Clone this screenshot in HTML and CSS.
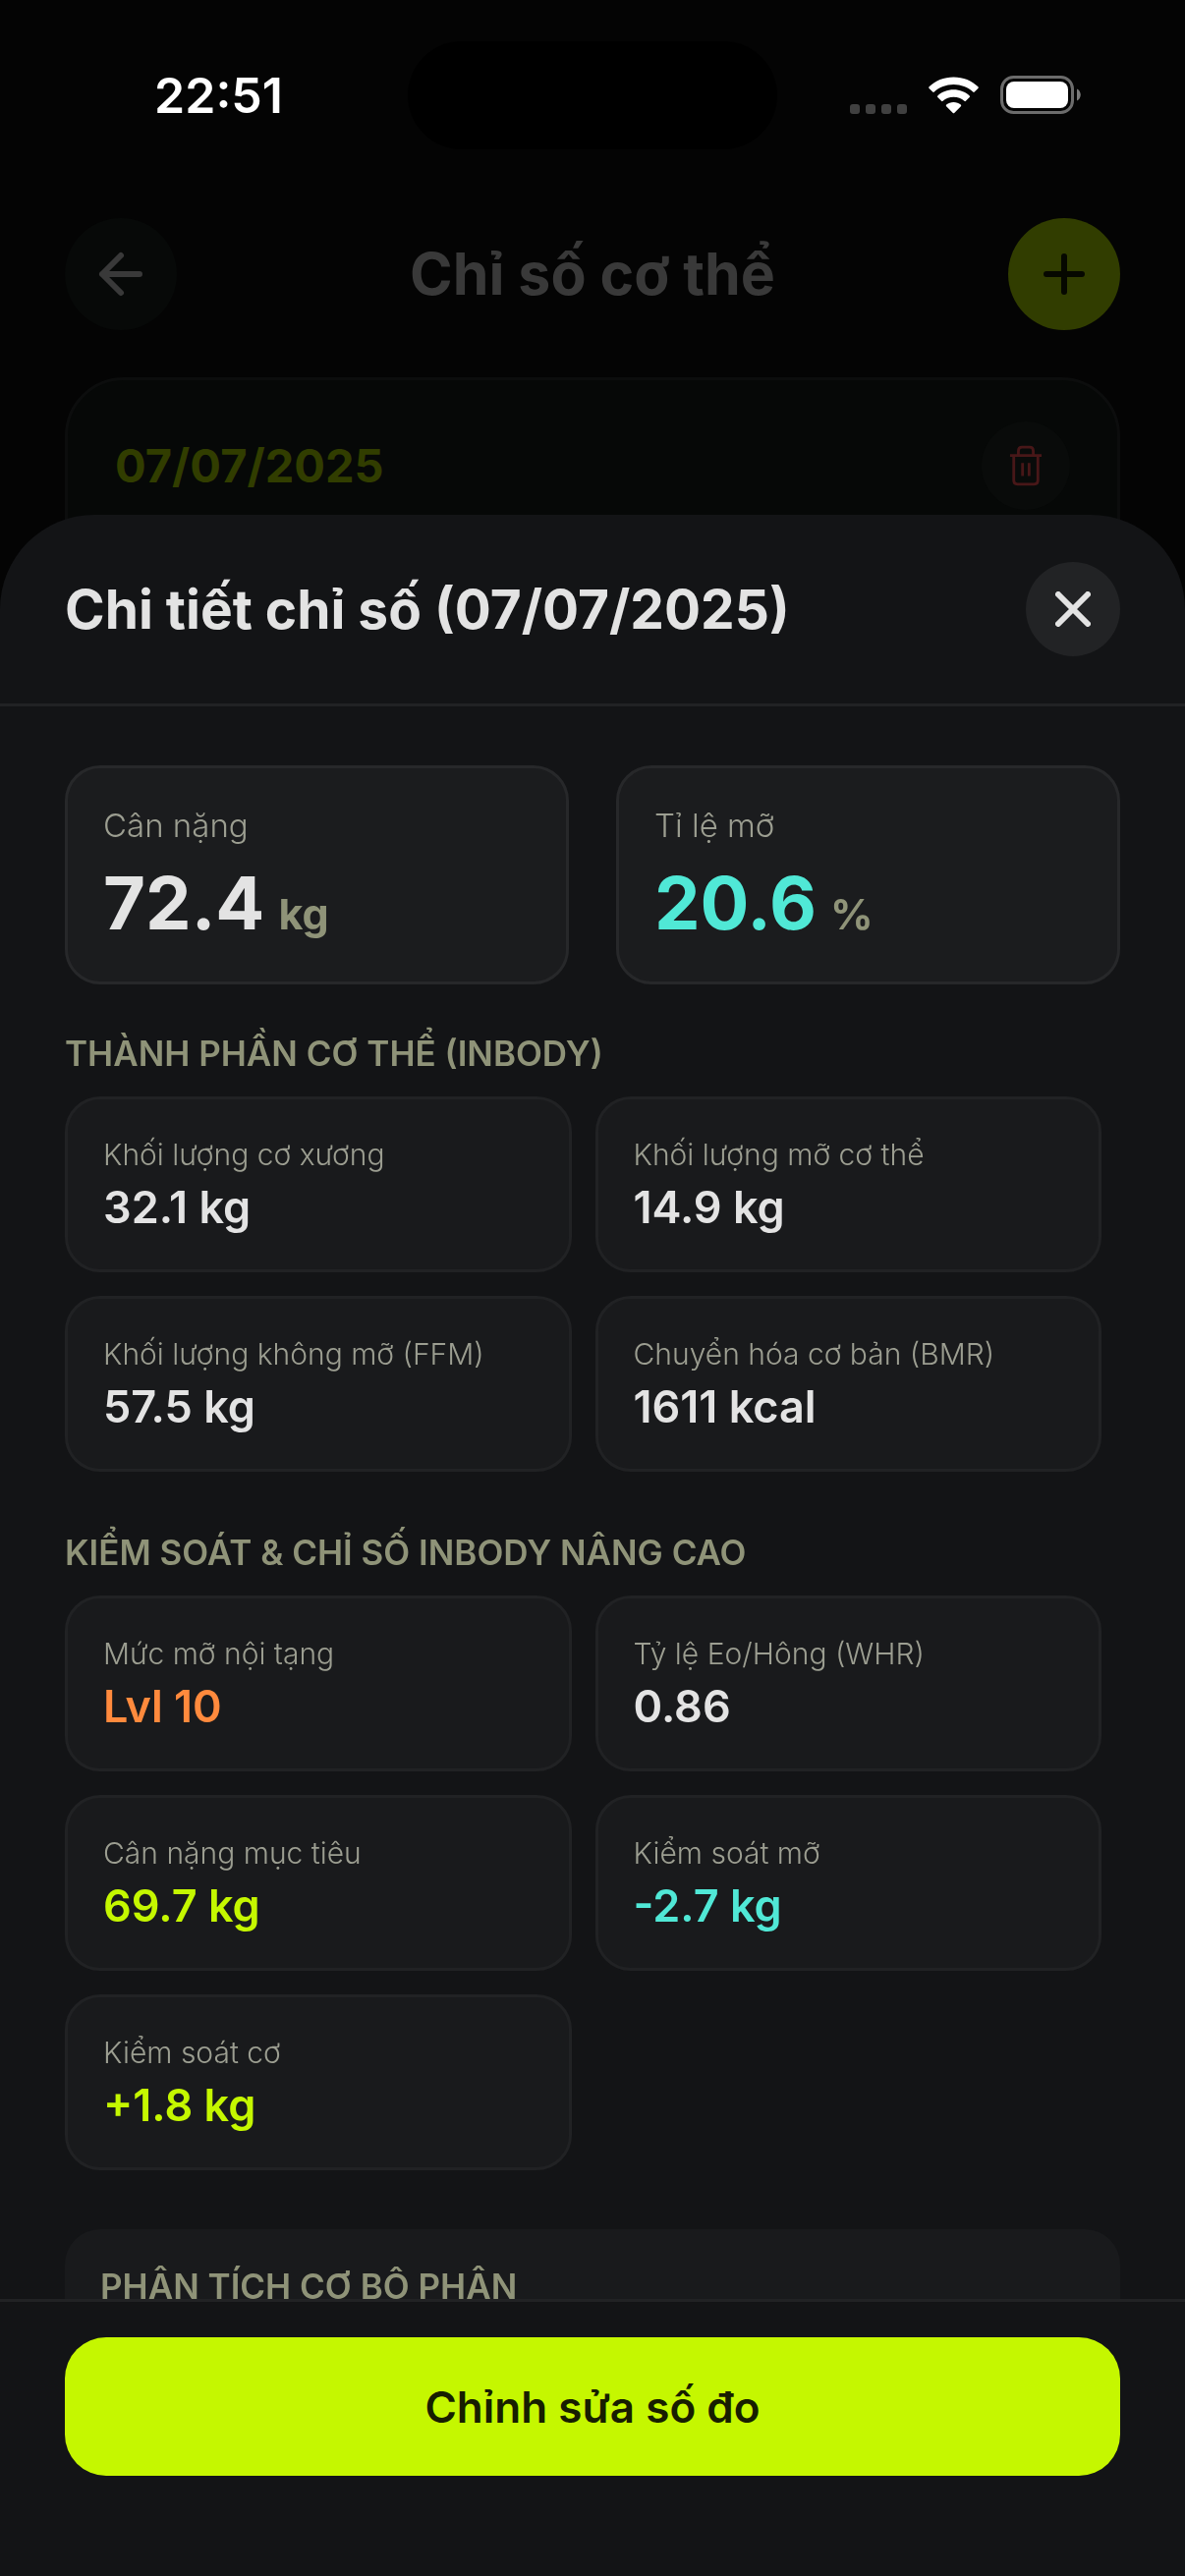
FILE: index.html
```html
<!DOCTYPE html>
<html lang="vi">
<head>
<meta charset="utf-8">
<meta name="viewport" content="width=device-width, initial-scale=1">
<title>Chỉ số cơ thể</title>
<link rel="stylesheet" href="styles.css">
</head>
<body>
<div class="status">
  <time class="status-time">22:51</time>
  <div class="island"></div>
  <div class="status-icons">
    <svg class="signal" viewBox="0 0 58 38" aria-hidden="true">
      <rect x="0" y="28" width="10" height="10" rx="3"/><rect x="16" y="28" width="10" height="10" rx="3"/><rect x="32" y="28" width="10" height="10" rx="3"/><rect x="48" y="28" width="10" height="10" rx="3"/>
    </svg>
    <svg class="wifi" viewBox="0 0 51 38" aria-hidden="true">
      <path d="M25.500 0.500C35.300 0.500 44.200 4.200 50.400 10.300Q51.200 11.100 50.400 11.900L46.800 15.500Q46 16.300 45.200 15.500C40 10.800 33.100 8 25.500 8S11 10.800 5.800 15.500Q5 16.300 4.200 15.500L.6 11.900Q-.2 11.100 .6 10.300C6.800 4.200 15.700 .5 25.500 .5Z"/>
      <path d="M25.500 13.300C31.800 13.300 37.500 15.600 41.700 19.500Q42.500 20.300 41.700 21.100L37.900 24.800Q37.200 25.500 36.400 24.800C33.500 22.300 29.700 20.800 25.500 20.800S17.500 22.300 14.600 24.800Q13.800 25.500 13.100 24.800L9.300 21.100Q8.500 20.300 9.300 19.500C13.500 15.600 19.200 13.300 25.500 13.300Z"/>
      <path d="M25.500 26C28.300 26 30.800 27 32.800 28.600Q33.700 29.400 32.900 30.200L26.200 37Q25.500 37.700 24.800 37L18.100 30.200Q17.300 29.400 18.200 28.600C20.200 27 22.700 26 25.500 26Z"/>
    </svg>
    <svg class="battery" viewBox="0 0 82 40" aria-hidden="true">
      <rect class="shell" x="1.500" y="1.500" width="72" height="36" rx="12"/>
      <rect x="6" y="6" width="63" height="27" rx="8"/>
      <path class="nub" d="M78 13.500c5 2 5 10 0 12z"/>
    </svg>
  </div>
</div>

<main class="screen">
  <header class="topbar">
    <button class="round back" aria-label="Quay lại">
      <svg viewBox="0 0 48 48" aria-hidden="true"><path d="M43 24H5M24 5 5 24l19 19"/></svg>
    </button>
    <h1 class="screen-title">Chỉ số cơ thể</h1>
    <button class="round add" aria-label="Thêm">
      <svg viewBox="0 0 48 48" aria-hidden="true"><path d="M24 6v36M6 24h36"/></svg>
    </button>
  </header>
  <article class="record">
    <h2 class="record-date">07/07/2025</h2>
    <button class="record-delete" aria-label="Xóa">
      <svg viewBox="0 0 36 44" aria-hidden="true"><path d="M1 11h34M10 11V6q0-4 4-4h8q4 0 4 4v5M5 11v27q0 4 4 4h18q4 0 4-4V11M14.500 19v14M21.500 19v14"/></svg>
    </button>
  </article>
</main>

<section class="sheet" role="dialog" aria-labelledby="sheet-title">
  <header class="sheet-head">
    <h2 class="sheet-title" id="sheet-title">Chi tiết chỉ số (07/07/2025)</h2>
    <button class="close" aria-label="Đóng">
      <svg viewBox="0 0 36 36" aria-hidden="true"><path d="M3 3l30 30M33 3 3 33"/></svg>
    </button>
  </header>

  <div class="sheet-body">
    <dl class="summary">
      <div class="tile tile-large">
        <dt class="label-large">Cân nặng</dt>
        <dd class="figure"><span>72.4</span><span class="unit">kg</span></dd>
      </div>
      <div class="tile tile-large">
        <dt class="label-large">Tỉ lệ mỡ</dt>
        <dd class="figure teal"><span>20.6</span><span class="unit">%</span></dd>
      </div>
    </dl>

    <section class="group group-first">
      <h3 class="group-title">THÀNH PHẦN CƠ THỂ (INBODY)</h3>
      <dl class="tiles">
        <div class="tile"><dt class="label">Khối lượng cơ xương</dt><dd class="value">32.1 kg</dd></div>
        <div class="tile"><dt class="label">Khối lượng mỡ cơ thể</dt><dd class="value">14.9 kg</dd></div>
        <div class="tile"><dt class="label">Khối lượng không mỡ (FFM)</dt><dd class="value">57.5 kg</dd></div>
        <div class="tile"><dt class="label">Chuyển hóa cơ bản (BMR)</dt><dd class="value">1611 kcal</dd></div>
      </dl>
    </section>

    <section class="group">
      <h3 class="group-title">KIỂM SOÁT &amp; CHỈ SỐ INBODY NÂNG CAO</h3>
      <dl class="tiles">
        <div class="tile"><dt class="label">Mức mỡ nội tạng</dt><dd class="value orange">Lvl 10</dd></div>
        <div class="tile"><dt class="label">Tỷ lệ Eo/Hông (WHR)</dt><dd class="value">0.86</dd></div>
        <div class="tile"><dt class="label">Cân nặng mục tiêu</dt><dd class="value lime">69.7 kg</dd></div>
        <div class="tile"><dt class="label">Kiểm soát mỡ</dt><dd class="value teal">-2.7 kg</dd></div>
        <div class="tile"><dt class="label">Kiểm soát cơ</dt><dd class="value lime">+1.8 kg</dd></div>
      </dl>
    </section>

    <section class="group segments">
      <h3 class="group-title">PHÂN TÍCH CƠ BỘ PHẬN</h3>
    </section>
  </div>

  <footer class="sheet-foot">
    <button class="edit">Chỉnh sửa số đo</button>
  </footer>
</section>
</body>
</html>
```

FILE: styles.css
```css
:root {
  --sheet: #131416;
  --line: #212224;
  --text: #e3e3e3;
  --muted: #9c9e91;
  --olive: #8f9378;
  --lime: #c5f700;
  --teal: #50e8d6;
  --orange: #ff8a3d;
}

* { box-sizing: border-box; }

body {
  margin: 0;
  min-height: 100vh;
  overflow: hidden;
  background: #040404;
  color: var(--text);
  font-family: Inter, "Noto Sans", sans-serif;
}

h1, h2, h3, dl, dd { margin: 0; }

button {
  display: flex;
  align-items: center;
  justify-content: center;
  flex: none;
  padding: 0;
  border: 0;
  border-radius: 50%;
  font-family: inherit;
}

button svg {
  fill: none;
  stroke: currentColor;
  stroke-linecap: round;
  stroke-linejoin: round;
}

/* Status bar */
.status {
  display: grid;
  grid-template-columns: minmax(0, 1fr) 376px minmax(0, 1fr);
  align-items: center;
  padding-top: 42px;
}
.status-time {
  padding-left: 30px;
  color: #fff;
  font-size: 50px;
  font-weight: 600;
  line-height: 60px;
  text-align: center;
}
.island { height: 110px; border-radius: 55px; background: #000; }
.status-icons {
  display: flex;
  align-items: center;
  justify-content: flex-end;
  gap: 22px;
  padding-right: 106px;
  fill: #fff;
}
.status-icons svg { flex: none; }
.signal { width: 58px; height: 38px; fill: #404040; }
.wifi { width: 51px; height: 38px; }
.battery { width: 82px; height: 40px; }
.shell { fill: none; stroke: #6c6c6c; stroke-width: 3; }
.nub { fill: #7a7a7a; }

/* Dimmed screen behind the sheet */
.screen { padding: 70px 66px 0; }
.topbar { display: flex; align-items: center; justify-content: space-between; }
.screen-title { color: #393939; font-size: 59px; font-weight: 700; line-height: 72px; }
.round { width: 114px; height: 114px; }
.round svg { width: 48px; height: 48px; stroke-width: 6; }
.back { background: #070908; color: #393939; }
.add { background: #313d00; color: #060800; }
.record {
  display: flex;
  align-items: flex-start;
  justify-content: space-between;
  margin-top: 48px;
  padding: 42px 48px;
  min-height: 240px;
  border: 3px solid #0c0d0d;
  border-radius: 60px;
  background: #060807;
}
.record-date { color: #313d00; font-size: 47px; font-weight: 700; line-height: 90px; }
.record-delete { width: 90px; height: 90px; background: #090b0a; color: #481718; }
.record-delete svg { width: 34px; height: 42px; stroke-width: 3; stroke-linecap: butt; }

/* Sheet */
.sheet {
  position: fixed;
  right: 0;
  bottom: 0;
  left: 0;
  display: flex;
  flex-direction: column;
  height: 80vh;
  border-radius: 96px 96px 0 0;
  background: var(--sheet);
}
.sheet-head {
  display: flex;
  align-items: center;
  justify-content: space-between;
  padding: 48px 66px;
  border-bottom: 3px solid var(--line);
}
.sheet-title { font-size: 55px; font-weight: 700; line-height: 66px; }
.close { width: 96px; height: 96px; background: #222325; color: var(--text); }
.close svg { width: 36px; height: 36px; stroke-width: 6; }
.sheet-body {
  flex: 1;
  min-height: 0;
  overflow-y: auto;
  padding: 60px 66px 0;
  scrollbar-width: none;
}

.summary { display: grid; grid-template-columns: 1fr 1fr; gap: 48px; }
.tile {
  display: flex;
  flex-direction: column;
  gap: 6px;
  padding: 36px;
  border: 3px solid var(--line);
  border-radius: 36px;
  background: #191a1c;
}
.tile-large { gap: 12px; border-color: #27282a; background: #1b1c1e; }
.label-large { color: var(--muted); font-size: 33px; font-weight: 300; line-height: 45px; }
.label { color: var(--muted); font-size: 30px; font-weight: 300; line-height: 41px; }
.figure {
  display: flex;
  align-items: baseline;
  gap: 14px;
  font-size: 74px;
  font-weight: 700;
  line-height: 88px;
}
.unit { color: var(--olive); font-size: 43px; line-height: 44px; }
.value { font-size: 45px; font-weight: 600; line-height: 54px; }
.teal { color: var(--teal); }
.lime { color: var(--lime); }
.orange { color: var(--orange); }

.group { margin-top: 60px; }
.group-first { margin-top: 48px; }
.group-title {
  margin-bottom: 22px;
  color: var(--olive);
  font-size: 35px;
  font-weight: 600;
  line-height: 44px;
}
.tiles { display: grid; grid-template-columns: 48% 48%; gap: 24px; }
.segments { padding: 36px; border-radius: 36px; background: #191a1c; }

.sheet-foot { padding: 36px 66px 102px; border-top: 3px solid var(--line); }
.edit {
  width: 100%;
  height: 141px;
  border-radius: 42px;
  background: var(--lime);
  color: #171e00;
  font-size: 44px;
  font-weight: 600;
}
```
